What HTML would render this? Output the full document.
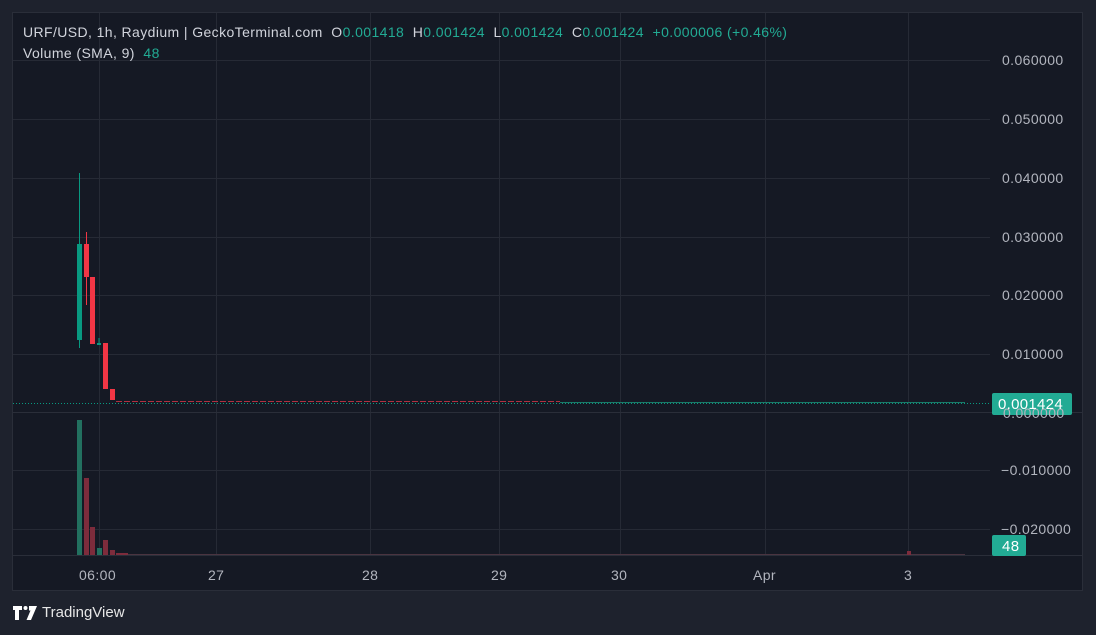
<!DOCTYPE html>
<html><head><style>
body{margin:0;width:1096px;height:635px;background:#1e222d;position:relative;overflow:hidden;font-family:"Liberation Sans",sans-serif;}
.frame{position:absolute;left:12px;top:12px;width:1071px;height:579px;background:#151924;border:1px solid #2a2e39;box-sizing:border-box}
.t{position:absolute;font-size:14px;color:#d1d4dc;white-space:nowrap;letter-spacing:0.4px}
.g{color:#22ab94}
.ax{position:absolute;font-size:14px;color:#b2b5be;white-space:nowrap;letter-spacing:0.4px}
</style></head><body>
<div class="frame"></div>
<svg width="1096" height="635" style="position:absolute;left:0;top:0">
<g stroke="#262a35" stroke-width="1">
<line x1="99.5" y1="13" x2="99.5" y2="555"/><line x1="216.5" y1="13" x2="216.5" y2="555"/><line x1="370.5" y1="13" x2="370.5" y2="555"/><line x1="499.5" y1="13" x2="499.5" y2="555"/><line x1="620.5" y1="13" x2="620.5" y2="555"/><line x1="765.5" y1="13" x2="765.5" y2="555"/><line x1="908.5" y1="13" x2="908.5" y2="555"/>
<line x1="13" y1="60.5" x2="990" y2="60.5"/><line x1="13" y1="119.5" x2="990" y2="119.5"/><line x1="13" y1="178.5" x2="990" y2="178.5"/><line x1="13" y1="237.5" x2="990" y2="237.5"/><line x1="13" y1="295.5" x2="990" y2="295.5"/><line x1="13" y1="354.5" x2="990" y2="354.5"/><line x1="13" y1="470.5" x2="990" y2="470.5"/><line x1="13" y1="529.5" x2="990" y2="529.5"/>
</g>
<line x1="13" y1="412.5" x2="1083" y2="412.5" stroke="#2a2e39"/>
<line x1="13" y1="555.5" x2="1083" y2="555.5" stroke="#2a2e39"/>
<line x1="79.5" y1="173" x2="79.5" y2="348" stroke="#089981"/>
<rect x="77" y="244" width="5" height="96" fill="#089981"/>
<line x1="86.5" y1="232" x2="86.5" y2="305" stroke="#f23645"/>
<rect x="84" y="244" width="5" height="33" fill="#f23645"/>
<rect x="90" y="277" width="5" height="67" fill="#f23645"/>
<line x1="99" y1="338" x2="99" y2="344" stroke="#089981"/>
<rect x="97" y="343" width="4" height="2" fill="#089981"/>
<rect x="103" y="343" width="5" height="46" fill="#f23645"/>
<rect x="110" y="389" width="5" height="11" fill="#f23645"/>
<line x1="116" y1="401.5" x2="560" y2="401.5" stroke="#b03040" stroke-dasharray="6 2"/>
<line x1="560" y1="402.5" x2="965" y2="402.5" stroke="#1a7a68"/>
<line x1="13" y1="403.5" x2="990" y2="403.5" stroke="#089981" stroke-dasharray="1 2"/>
<rect x="77" y="420" width="5" height="135" fill="#22705f"/>
<rect x="84" y="478" width="5" height="77" fill="#7d2c3c"/>
<rect x="90" y="527" width="5" height="28" fill="#7d2c3c"/>
<rect x="97" y="548" width="5" height="7" fill="#22705f"/>
<rect x="103" y="540" width="5" height="15" fill="#7d2c3c"/>
<rect x="110" y="550" width="5" height="5" fill="#7d2c3c"/>
<rect x="116" y="553" width="12" height="2" fill="#7d2c3c"/>
<line x1="128" y1="554.5" x2="965" y2="554.5" stroke="#4a3440"/>
<rect x="907" y="551" width="4" height="4" fill="#7d2c3c"/>
<rect x="992" y="393" width="80" height="22" rx="2" fill="#22ab94"/>
<rect x="992" y="535" width="34" height="21" rx="2" fill="#22ab94"/>
<path d="M13 606h9v4h-3v10h-4v-10h-2z" fill="#fff"/>
<circle cx="25.5" cy="608" r="2" fill="#fff"/>
<path d="M29 606h8l-6 14h-4.5l4-9.5h-1.5z" fill="#fff"/>
</svg>
<div class="t" style="left:23px;top:24px">URF/USD, 1h, Raydium | GeckoTerminal.com&nbsp; O<span class="g">0.001418</span> &nbsp;H<span class="g">0.001424</span> &nbsp;L<span class="g">0.001424</span> &nbsp;C<span class="g">0.001424</span> &nbsp;<span class="g">+0.000006 (+0.46%)</span></div>
<div class="t" style="left:23px;top:45px">Volume (SMA, 9)&nbsp; <span class="g">48</span></div>
<div class="ax" style="left:1002px;top:52px">0.060000</div>
<div class="ax" style="left:1002px;top:111px">0.050000</div>
<div class="ax" style="left:1002px;top:170px">0.040000</div>
<div class="ax" style="left:1002px;top:229px">0.030000</div>
<div class="ax" style="left:1002px;top:287px">0.020000</div>
<div class="ax" style="left:1002px;top:346px">0.010000</div>
<div class="ax" style="left:1003px;top:405px">0.000000</div>
<div class="ax" style="left:1001px;top:462px">−0.010000</div>
<div class="ax" style="left:1001px;top:521px">−0.020000</div>
<div class="ax" style="left:998px;top:396px;color:#fff;font-size:15px;letter-spacing:0.3px">0.001424</div>
<div class="ax" style="left:1002px;top:538px;color:#fff;font-size:15px">48</div>
<div class="ax" style="left:79px;top:567px">06:00</div>
<div class="ax" style="left:208px;top:567px">27</div>
<div class="ax" style="left:362px;top:567px">28</div>
<div class="ax" style="left:491px;top:567px">29</div>
<div class="ax" style="left:611px;top:567px">30</div>
<div class="ax" style="left:753px;top:567px">Apr</div>
<div class="ax" style="left:904px;top:567px">3</div>
<div class="t" style="left:42px;top:604px;font-size:15px;color:#e6e6e6;letter-spacing:0">TradingView</div>
</body></html>
